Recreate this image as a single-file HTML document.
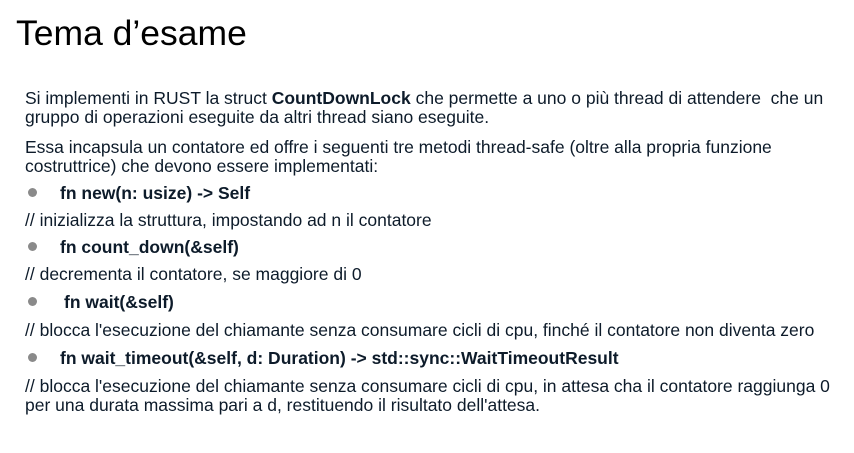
<!DOCTYPE html>
<html><head><meta charset="utf-8"><style>
body{margin:0;width:854px;height:453px;background:#fff;position:relative;overflow:hidden;font-family:"Liberation Sans",sans-serif}
.t{position:absolute;left:16px;top:13px;font-size:35.5px;color:#000;line-height:40px}
.l{position:absolute;left:25px;font-size:17.5px;line-height:20px;color:#0d1b2a;white-space:nowrap}
.b{font-weight:bold}
.d{position:absolute;left:28px;width:9px;height:9px;border-radius:50%;background:#8a8a8a}
</style></head><body>
<div class="t">Tema d’esame</div>
<div class="l" style="top:88px">Si implementi in RUST la struct <b>CountDownLock</b> che permette a uno o più thread di attendere&nbsp; che un</div>
<div class="l" style="top:107px">gruppo di operazioni eseguite da altri thread siano eseguite.</div>
<div class="l" style="top:137px">Essa incapsula un contatore ed offre i seguenti tre metodi thread-safe (oltre alla propria funzione</div>
<div class="l" style="top:156px">costruttrice) che devono essere implementati:</div>
<div class="d" style="top:188px"></div>
<div class="l b" style="top:183px;left:60px">fn new(n: usize) -&gt; Self</div>
<div class="l" style="top:210px">// inizializza la struttura, impostando ad n il contatore</div>
<div class="d" style="top:242px"></div>
<div class="l b" style="top:237px;left:60px">fn count_down(&amp;self)</div>
<div class="l" style="top:264px">// decrementa il contatore, se maggiore di 0</div>
<div class="d" style="top:297px"></div>
<div class="l b" style="top:292px;left:64px">fn wait(&amp;self)</div>
<div class="l" style="top:320px">// blocca l'esecuzione del chiamante senza consumare cicli di cpu, finché il contatore non diventa zero</div>
<div class="d" style="top:353px"></div>
<div class="l b" style="top:348px;left:60px">fn wait_timeout(&amp;self, d: Duration) -&gt; std::sync::WaitTimeoutResult</div>
<div class="l" style="top:376px">// blocca l'esecuzione del chiamante senza consumare cicli di cpu, in attesa cha il contatore raggiunga 0</div>
<div class="l" style="top:395px">per una durata massima pari a d, restituendo il risultato dell'attesa.</div>
</body></html>
